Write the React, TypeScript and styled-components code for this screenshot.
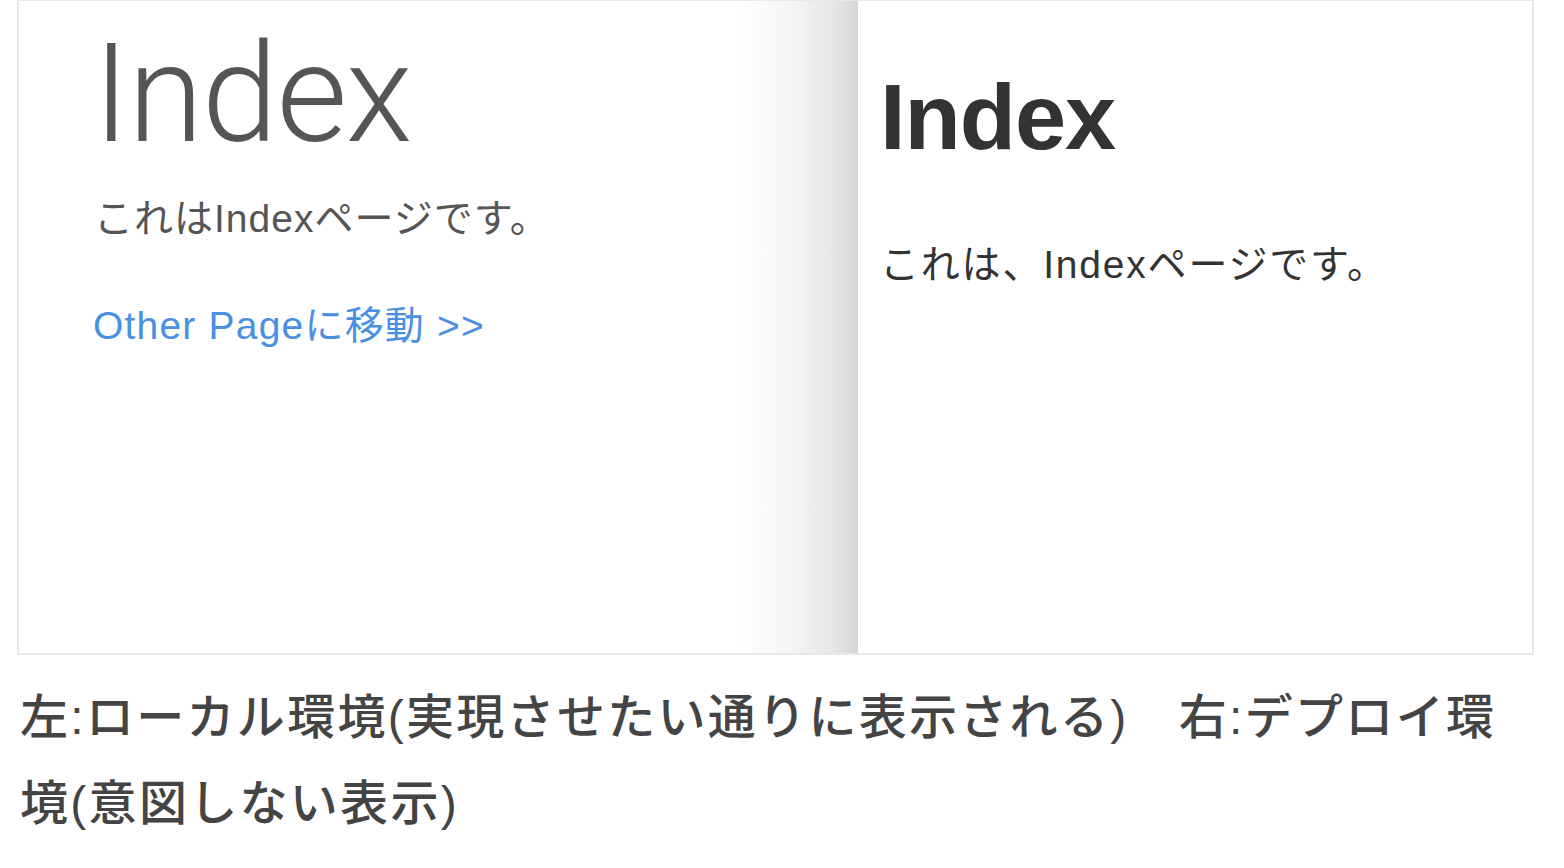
import React from 'react'
import styled, { createGlobalStyle } from 'styled-components';

const GlobalStyle = createGlobalStyle`
body {
margin: 0;
background: #ffffff;
font-family: "Liberation Sans", "Noto Sans CJK JP", sans-serif;
}
`;

export default function App() {
    return (
        <Page>
            <GlobalStyle />
            <Frame>
                <LocalPanel>
                    <LightTitle>Index</LightTitle>
                    <LocalText>これはIndexページです。</LocalText>
                    <PageLink href="#">Other Pageに移動 &gt;&gt;</PageLink>
                </LocalPanel>
                <DeployPanel>
                    <BoldTitle>Index</BoldTitle>
                    <DeployText>これは、Indexページです。</DeployText>
                </DeployPanel>
            </Frame>
            <Caption>左:ローカル環境(実現させたい通りに表示される)　右:デプロイ環境(意図しない表示)</Caption>
        </Page>
    );
}

const Page = styled.main`
display: flex;
flex-direction: column;
padding-left: 17px;
width: 1517px;
`;

const Frame = styled.section`
display: flex;
height: 652px;
border: 2px solid #e8e8e8;
border-top-width: 1px;
background: #ffffff;
`;

const LocalPanel = styled.div`
display: flex;
flex-direction: column;
align-items: flex-start;
width: 839px;
padding-left: 74px;
box-sizing: border-box;
background: linear-gradient(to right, #ffffff 0px, #ffffff 715px, #f6f6f6 770px, #e6e6e6 815px, #d6d6d6 839px);
`;

const DeployPanel = styled.div`
flex: 1;
display: flex;
flex-direction: column;
padding-left: 22px;
`;

const LightTitle = styled.h1`
margin: 18px 0 0;
font-family: Roboto, "Liberation Sans", sans-serif;
font-weight: 300;
font-size: 137px;
line-height: 150px;
color: #555555;
letter-spacing: -1.5px;
`;

const LocalText = styled.p`
margin: 28px 0 0 1px;
font-family: "Liberation Sans", "Noto Sans CJK JP", sans-serif;
font-size: 39px;
line-height: 44px;
color: #555555;
letter-spacing: 1px;
`;

const PageLink = styled.a`
margin: 63px 0 0 0;
font-family: "Liberation Sans", "Noto Sans CJK JP", sans-serif;
font-size: 39px;
line-height: 44px;
color: #4a90e2;
text-decoration: none;
letter-spacing: 1.2px;
`;

const BoldTitle = styled.h1`
margin: 66px 0 0;
font-family: "Liberation Sans", sans-serif;
font-weight: 700;
font-size: 92px;
line-height: 100px;
color: #333333;
letter-spacing: -1px;
`;

const DeployText = styled.p`
margin: 76px 0 0;
font-family: "Liberation Sans", "Noto Sans CJK JP", sans-serif;
font-size: 39px;
line-height: 44px;
color: #333333;
letter-spacing: 1.8px;
`;

const Caption = styled.p`
margin: 20px 0 0 3px;
font-family: "Liberation Sans", "Noto Sans CJK JP", sans-serif;
font-size: 48px;
font-weight: 500;
line-height: 86px;
color: #444444;
letter-spacing: 2.3px;
`;
